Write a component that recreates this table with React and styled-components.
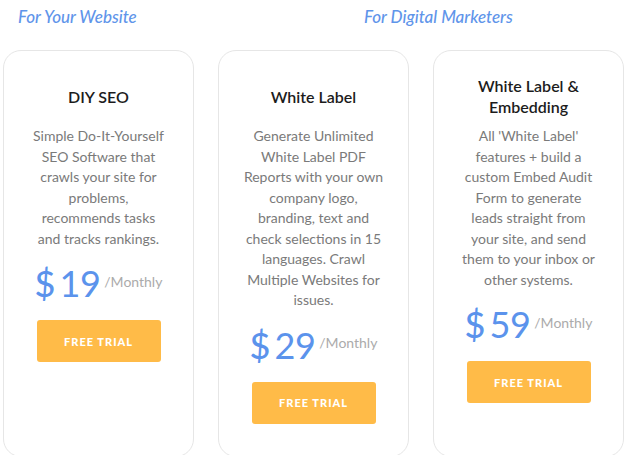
import React from 'react';
import styled, { createGlobalStyle } from 'styled-components';

const GlobalStyle = createGlobalStyle`
    body{
        margin: 0;
        background: #fff;
        font-family: Lato, "Open Sans", sans-serif;
    }
`

const Page = styled('div')`
    width: 624px;
    height: 455px;
    overflow: hidden;
    padding-left: 3px;
    box-sizing: border-box;
    display: grid;
    grid-template-columns: repeat(3, 191px);
    column-gap: 24px;
    grid-template-rows: 34px auto;
    row-gap: 16px;
    align-content: start;
`

const Heading = styled('div')`
    grid-column: ${p => p.span};
    padding-left: ${p => p.offset}px;
    line-height: 34px;
    font-size: 17px;
    font-style: italic;
    font-weight: 500;
    color: #5f95ea;
    white-space: nowrap;
`

const Card = styled('div')`
    height: 407px;
    box-sizing: border-box;
    border: 1px solid #e6e6e6;
    border-radius: 18px;
    padding-top: 20px;
    display: flex;
    flex-direction: column;
    align-items: center;
    text-align: center;
`

const Title = styled('div')`
    height: 50px;
    display: flex;
    align-items: center;
    justify-content: center;
    font-size: 16px;
    line-height: 21px;
    font-weight: 600;
    color: #1c1c1c;
`

const Desc = styled('p')`
    margin: 5px 0 0;
    font-size: 14px;
    line-height: 20.5px;
    color: #7a7a7a;
    white-space: nowrap;
`

const Price = styled('div')`
    margin-top: 14px;
    height: 40px;
    display: flex;
    align-items: center;
    color: #5b93ec;
    .dollar{
        font-size: 36px;
        font-weight: 500;
        margin-right: 4px;
    }
    .amount{
        font-size: 36px;
        letter-spacing: -0.5px;
    }
    .period{
        margin: -4px 0 0 4px;
        font-size: 14px;
        color: #ababab;
    }
`

const TrialButton = styled('button')`
    margin-top: 17px;
    width: 124px;
    height: 42px;
    border: none;
    border-radius: 3px;
    background-color: #ffbb48;
    color: #fff;
    font-family: Lato, sans-serif;
    font-size: 11px;
    font-weight: 900;
    letter-spacing: 1px;
    cursor: pointer;
`

const plans = [
    {
        title: ['DIY SEO'],
        desc: ['Simple Do-It-Yourself', 'SEO Software that', 'crawls your site for', 'problems,', 'recommends tasks', 'and tracks rankings.'],
        price: '19',
    },
    {
        title: ['White Label'],
        desc: ['Generate Unlimited', 'White Label PDF', 'Reports with your own', 'company logo,', 'branding, text and', 'check selections in 15', 'languages. Crawl', 'Multiple Websites for', 'issues.'],
        price: '29',
    },
    {
        title: ['White Label &', 'Embedding'],
        desc: ["All 'White Label'", 'features + build a', 'custom Embed Audit', 'Form to generate', 'leads straight from', 'your site, and send', 'them to your inbox or', 'other systems.'],
        price: '59',
    },
]

const lines = (arr) => arr.map((l, i) => (
    <React.Fragment key={i}>{l}{i < arr.length - 1 && <br />}</React.Fragment>
))

const App = () => {
    return(
        <>
            <GlobalStyle />
            <Page>
                <Heading span="1" offset={15}>For Your Website</Heading>
                <Heading span="2 / span 2" offset={146}>For Digital Marketers</Heading>
                {plans.map(plan => (
                    <Card key={plan.price}>
                        <Title><span>{lines(plan.title)}</span></Title>
                        <Desc>{lines(plan.desc)}</Desc>
                        <Price>
                            <span className='dollar'>$</span>
                            <span className='amount'>{plan.price}</span>
                            <span className='period'>/Monthly</span>
                        </Price>
                        <TrialButton>FREE TRIAL</TrialButton>
                    </Card>
                ))}
            </Page>
        </>
    )
}

export default App
